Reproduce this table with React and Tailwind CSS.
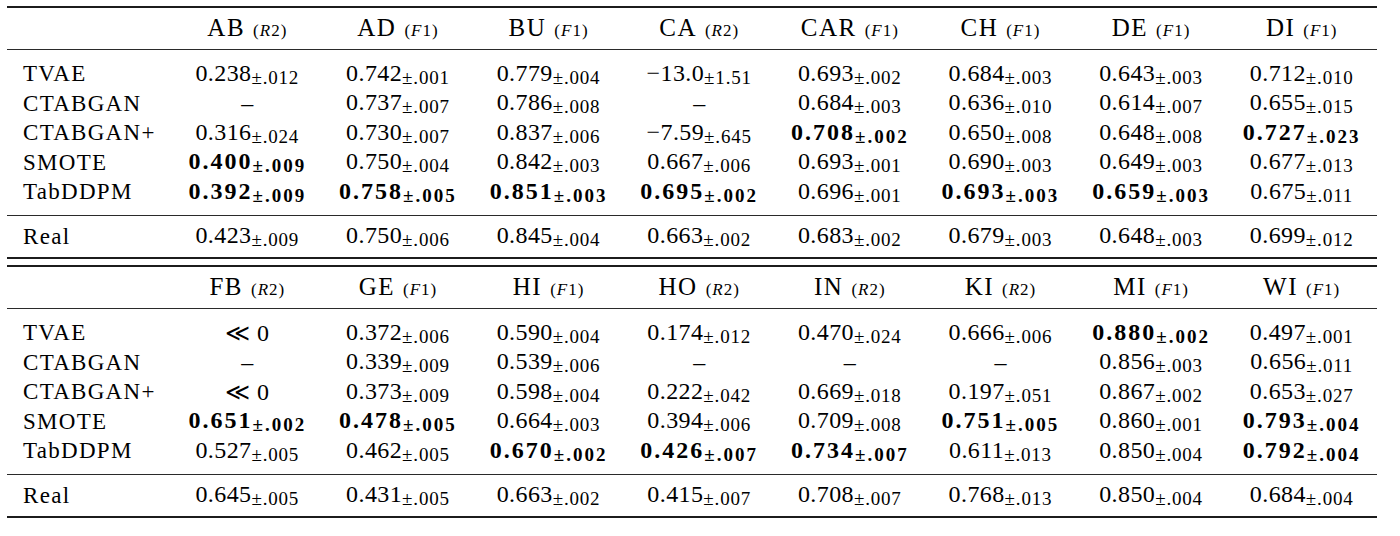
import React from 'react';

const table1 = {
  cols: [['AB', 'R', '2'], ['AD', 'F', '1'], ['BU', 'F', '1'], ['CA', 'R', '2'], ['CAR', 'F', '1'], ['CH', 'F', '1'], ['DE', 'F', '1'], ['DI', 'F', '1']],
  rows: [
    ['TVAE', ['0.238|.012', '0.742|.001', '0.779|.004', '−13.0|1.51', '0.693|.002', '0.684|.003', '0.643|.003', '0.712|.010']],
    ['CTABGAN', ['–', '0.737|.007', '0.786|.008', '–', '0.684|.003', '0.636|.010', '0.614|.007', '0.655|.015']],
    ['CTABGAN+', ['0.316|.024', '0.730|.007', '0.837|.006', '−7.59|.645', '*0.708|.002', '0.650|.008', '0.648|.008', '*0.727|.023']],
    ['SMOTE', ['*0.400|.009', '0.750|.004', '0.842|.003', '0.667|.006', '0.693|.001', '0.690|.003', '0.649|.003', '0.677|.013']],
    ['TabDDPM', ['*0.392|.009', '*0.758|.005', '*0.851|.003', '*0.695|.002', '0.696|.001', '*0.693|.003', '*0.659|.003', '0.675|.011']]
  ],
  real: ['0.423|.009', '0.750|.006', '0.845|.004', '0.663|.002', '0.683|.002', '0.679|.003', '0.648|.003', '0.699|.012']
};

const table2 = {
  cols: [['FB', 'R', '2'], ['GE', 'F', '1'], ['HI', 'F', '1'], ['HO', 'R', '2'], ['IN', 'R', '2'], ['KI', 'R', '2'], ['MI', 'F', '1'], ['WI', 'F', '1']],
  rows: [
    ['TVAE', ['<<0', '0.372|.006', '0.590|.004', '0.174|.012', '0.470|.024', '0.666|.006', '*0.880|.002', '0.497|.001']],
    ['CTABGAN', ['–', '0.339|.009', '0.539|.006', '–', '–', '–', '0.856|.003', '0.656|.011']],
    ['CTABGAN+', ['<<0', '0.373|.009', '0.598|.004', '0.222|.042', '0.669|.018', '0.197|.051', '0.867|.002', '0.653|.027']],
    ['SMOTE', ['*0.651|.002', '*0.478|.005', '0.664|.003', '0.394|.006', '0.709|.008', '*0.751|.005', '0.860|.001', '*0.793|.004']],
    ['TabDDPM', ['0.527|.005', '0.462|.005', '*0.670|.002', '*0.426|.007', '*0.734|.007', '0.611|.013', '0.850|.004', '*0.792|.004']]
  ],
  real: ['0.645|.005', '0.431|.005', '0.663|.002', '0.415|.007', '0.708|.007', '0.768|.013', '0.850|.004', '0.684|.004']
};

const grid = 'grid grid-cols-[165px_repeat(8,1fr)] items-center';

function Val({ v }) {
  if (v === '–') return <span className="text-[24px]">–</span>;
  if (v === '<<0') return <span className="text-[24px] tracking-[0.6px]">≪&nbsp;0</span>;
  const bold = v.startsWith('*');
  const [main, sub] = v.replace('*', '').split('|');
  return (
    <span className={bold ? 'font-bold tracking-[2px] text-[24px]' : 'tracking-[0.4px] text-[24px]'}>
      {main}
      <span className={bold ? 'text-[19px] align-[-3px]' : 'text-[19px] align-[-3px] tracking-[0.8px]'}>±{sub}</span>
    </span>
  );
}

function Row({ label, values }) {
  return (
    <div className={`${grid} h-[29.5px]`}>
      <div className="pl-[16px] text-[23px] tracking-[1.3px]">{label}</div>
      {values.map((v, i) => (
        <div key={i} className="text-center">
          <Val v={v} />
        </div>
      ))}
    </div>
  );
}

function Table({ data }) {
  return (
    <div className="border-t-2 border-b-2 border-[#1c1c1c]">
      {/* header */}
      <div className={`${grid} h-[42px] border-b border-[#2a2a2a]`}>
        <div />
        {data.cols.map(([name, letter, num]) => (
          <div key={name} className="text-center pb-[2px]">
            <span className="text-[25px] tracking-[1.5px]">{name}</span>
            <span className="text-[17px] ml-[8px] tracking-[1px]">
              (<i>{letter}</i>{num})
            </span>
          </div>
        ))}
      </div>

      <div className="pt-[9px] pb-[8.5px] border-b border-[#2a2a2a]">
        {data.rows.map(([label, values]) => (
          <Row key={label} label={label} values={values} />
        ))}
      </div>

      <div className="pt-[5.5px] pb-[6px]">
        <Row label="Real" values={data.real} />
      </div>
    </div>
  );
}

export default function App() {
  return (
    <div className="w-[1400px] h-[536px] bg-white text-black leading-none font-['Liberation_Serif',serif] overflow-hidden">
      <div className="ml-[7px] mt-[6px] w-[1370px] flex flex-col gap-[6px]">
        <Table data={table1} />
        <Table data={table2} />
      </div>
    </div>
  );
}
